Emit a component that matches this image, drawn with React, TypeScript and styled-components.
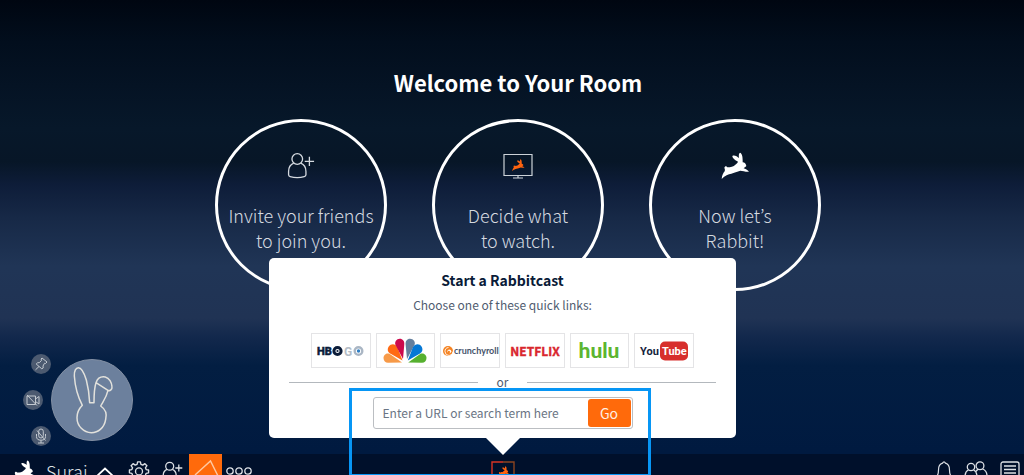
import React from "react";
import styled, { createGlobalStyle } from "styled-components";

const font = `"Noto Sans CJK KR", "Noto Sans", sans-serif`;

const GlobalStyle = createGlobalStyle`
  *, *::before, *::after { box-sizing: border-box; }
  html, body { margin: 0; }
  body { font-family: ${font}; background: #001a40; }
  button, input { font-family: inherit; }
  h1, h2, p { margin: 0; }
  svg { display: block; flex: none; overflow: visible; }
`;

const Room = styled.div`
  position: relative;
  display: flex;
  flex-direction: column;
  height: 100vh;
  overflow: hidden;
  background: linear-gradient(
    180deg,
    #000611 0%,
    #020e1d 9%,
    #051324 18%,
    #07182a 27%,
    #071627 34%,
    #0e1d39 39%,
    #172947 46%,
    #203556 56%,
    #203354 67%,
    #12284c 71%,
    #031e42 77%,
    #001a40 95%
  );
`;

const Stage = styled.main`
  flex: 1;
  min-height: 0;
  display: flex;
  flex-direction: column;
  align-items: center;
  padding: 66px 0 0 12px;
`;

const Title = styled.h1`
  color: #fff;
  font-size: 22px;
  font-weight: 700;
  line-height: 32px;
`;

const Steps = styled.div`
  display: flex;
  justify-content: center;
  gap: 45px;
  margin-top: 21px;
`;

const Step = styled.section`
  display: flex;
  flex-direction: column;
  align-items: center;
  width: 172px;
  height: 172px;
  padding-top: 30px;
  border: 3px solid #fff;
  border-radius: 50%;
  color: #d5dae0;
  text-align: center;
`;

const StepText = styled.p`
  margin-top: 23px;
  font-size: 18px;
  font-weight: 300;
  line-height: 25px;
  white-space: nowrap;
`;

const PopoverLayer = styled.div`
  position: absolute;
  left: 0;
  right: 19px;
  bottom: 37px;
  display: flex;
  justify-content: center;
`;

const Popover = styled.section`
  position: relative;
  display: flex;
  flex-direction: column;
  align-items: center;
  width: 467px;
  padding: 11px 20px 9px;
  border-radius: 5px;
  background: #fff;
  color: #505c70;

  &::after {
    content: "";
    position: absolute;
    top: 100%;
    left: 50%;
    margin-left: -17px;
    border: 17px solid transparent;
    border-top-color: #fff;
    border-bottom: 0;
  }
`;

const PopoverTitle = styled.h2`
  color: #0a1b38;
  font-size: 14px;
  font-weight: 700;
  line-height: 22px;
`;

const Hint = styled.p`
  margin-top: 4px;
  font-size: 12px;
  line-height: 20px;
`;

const QuickLinks = styled.nav`
  display: grid;
  grid-template-columns: repeat(6, 1fr);
  gap: 5px;
  width: 383px;
  margin-top: 18px;
`;

const QuickLink = styled.a`
  display: flex;
  align-items: center;
  justify-content: center;
  height: 35px;
  border: 1px solid #e4e4e6;
  text-decoration: none;
`;

const Divider = styled.div`
  display: flex;
  align-items: center;
  align-self: stretch;
  gap: 19px;
  margin-top: 4px;
  font-size: 12px;
  line-height: 20px;

  &::before,
  &::after {
    content: "";
    flex: 1;
    height: 1px;
    background: #b3b8bd;
  }
`;

const Search = styled.form`
  display: flex;
  width: 260px;
  height: 32px;
  margin-top: 5px;
  padding: 1px;
  border: 1px solid #bbbec2;
  border-radius: 3px;
`;

const SearchInput = styled.input`
  flex: 1;
  min-width: 0;
  padding: 0 8px 1px;
  border: 0;
  outline: 0;
  background: none;
  color: #505c70;
  font-size: 12px;

  &::placeholder {
    color: #6a7584;
    opacity: 1;
  }
`;

const GoButton = styled.button`
  width: 43px;
  padding: 0 0 1px;
  border: 0;
  border-radius: 3px;
  background: #ff6a0b;
  color: #fff0e4;
  font-size: 14px;
`;

const Self = styled.div`
  position: absolute;
  left: 23px;
  bottom: 29px;
  display: flex;
  align-items: center;
`;

const SelfControls = styled.div`
  display: flex;
  flex-direction: column;
  gap: 16px;
  width: 28px;
`;

const RoundButton = styled.button<{ $shift?: boolean }>`
  display: flex;
  align-items: center;
  justify-content: center;
  width: 20px;
  height: 20px;
  margin-left: ${(p) => (p.$shift ? "8px" : "0")};
  padding: 0;
  border: 0;
  border-radius: 50%;
  background: #4c5a70;
  color: #c3c9d0;
`;

const Avatar = styled.div`
  display: flex;
  align-items: center;
  justify-content: center;
  width: 82px;
  height: 82px;
  border: 1px solid #8390a4;
  border-radius: 50%;
  background: #6c809d;
`;

const Bar = styled.footer`
  display: grid;
  grid-template-columns: 1fr auto 1fr;
  flex: none;
  height: 21px;
  padding-right: 18px;
  overflow: hidden;
  background: #00102b;
  color: #dde1e6;
`;

const BarGroup = styled.div<{ $end?: boolean }>`
  display: flex;
  align-items: flex-start;
  justify-content: ${(p) => (p.$end ? "flex-end" : "flex-start")};
  gap: ${(p) => (p.$end ? "12px" : "0")};
  padding-left: ${(p) => (p.$end ? "0" : "12px")};
  margin-right: ${(p) => (p.$end ? "-14px" : "0")};
`;

const BarButton = styled.button<{ $top?: number; $gap?: number }>`
  display: flex;
  margin: ${(p) => p.$top ?? 7}px 0 0 ${(p) => p.$gap ?? 0}px;
  padding: 0;
  border: 0;
  background: none;
  color: inherit;
`;

const ShareButton = styled(BarButton)`
  width: 33px;
  height: 34px;
  margin: 0 0 0 6px;
  background: #ff6a0b;
  color: #ffc9a2;
`;

const UserName = styled.span`
  margin: 4px 0 0 11px;
  font-size: 18px;
  font-weight: 300;
  line-height: 26px;
`;

const Highlight = styled.div`
  position: absolute;
  left: calc(50% - 163px);
  bottom: -2px;
  width: 302px;
  height: 89px;
  border: 3px solid #0796f5;
  pointer-events: none;
`;

const rabbitPath =
  "M2 81C3 69 7 63 11 58C12 54 12 51 10 48C11 43 16 41 19 46C29 45 38 45 43 38C47 35 50 32 51 29C42 25 34 18 34 12C40 8 49 14 54 18C53 10 53 4 57 2C63 4 65 13 65 26L65 31C71 31 75 36 76 42C73 46 70 46 68 49C73 51 80 54 84 59C74 60 65 56 58 56C49 60 39 61 31 65C22 66 12 70 2 81Z";

const Rabbit = ({ w = 28 }: { w?: number }) => (
  <svg width={w} height={w} viewBox="0 0 84 84" fill="#fff">
    <path d={rabbitPath} />
  </svg>
);

const AddPerson = ({ w, sw }: { w: number; sw: number }) => (
  <svg width={w} height={w} viewBox="0 0 30 30" fill="none" stroke="currentColor" strokeWidth={sw}>
    <circle cx="11" cy="7.5" r="5.7" />
    <path d="M7.2 12C3.4 13.5 1.7 17 1.7 21V24.5Q1.7 26 3.3 26.4Q11 28.4 18.5 26.4Q20.3 26 20.3 24.5V21C20.3 17 18.5 13.5 14.8 12M19 10H29M24 5V15" />
  </svg>
);

const Monitor = () => (
  <svg width="30" height="28" viewBox="0 0 30 28" fill="none" stroke="#ccd2d8" strokeWidth="1.2">
    <path d="M1 2.500H29V23.500H1ZM15 23.500V26M10 26H20" />
    <path transform="translate(9 7) scale(.15)" stroke="none" fill="#ff6410" d={rabbitPath} />
  </svg>
);

const CastIcon = () => (
  <svg width="24" height="24" viewBox="0 0 24 24" fill="none">
    <path d="M1 20V1H12" stroke="#d83424" strokeWidth="1.4" />
    <path d="M12 1H23V20" stroke="#8a4420" strokeWidth="1.4" />
    <path transform="translate(6.5 5) scale(.14)" fill="#ff6410" d={rabbitPath} />
  </svg>
);

const HboGo = () => (
  <svg width="48" height="14" viewBox="0 0 48 14" fontFamily="Roboto" fontWeight="700">
    <text x="0" y="11" fill="#0b1c38" stroke="#0b1c38" strokeWidth=".6" fontSize="11">HB</text>
    <circle cx="20.5" cy="7" r="3.6" fill="none" stroke="#0b1c38" strokeWidth="3" />
    <circle cx="20.5" cy="7" r="1.1" fill="#0b1c38" />
    <text x="27" y="11.5" fill="#b4bdc7" fontSize="12">G</text>
    <circle cx="41.5" cy="7" r="3.8" fill="none" stroke="#aab6c4" strokeWidth="2.4" />
    <circle cx="41.5" cy="7" r="1.7" fill="#2f7fc4" />
  </svg>
);

const Nbc = () => (
  <svg width="44" height="26" viewBox="0 0 44 26">
    <path fill="#f79a48" d="M19 24.5L6.5 15.7C2.500 14.500 .5 17.500 .5 20C.5 23 2.500 24.700 5 24.700Z" />
    <path fill="#ff6a13" d="M19.500 22.500L14.500 9.500C12.500 5.500 8 5.500 5.800 8.500C3.800 11.500 4.800 14 7.200 15.500Z" />
    <path fill="#cc0a4c" d="M20 21L21.200 7.500C22 3 19.500 .8 16.800 .8C13.500 .8 11.300 4 12.500 7Z" />
    <path fill="#647f9d" d="M24 21L31.500 7C32.800 4 30.500 .8 27 .8C24.200 .8 22 3 22.700 7.500Z" />
    <path fill="#0578d5" d="M24.800 22.500L37 15.500C39.500 14 40.200 11 38.500 8.500C36.500 5.500 32 5.500 29.800 9.500Z" />
    <path fill="#56b02f" d="M25.200 24.500L37.500 15.700C41.500 14.500 43.500 17.500 43.500 20C43.500 23 41.500 24.700 39 24.700Z" />
  </svg>
);

const Crunchyroll = () => (
  <svg width="56" height="12" viewBox="0 0 56 12">
    <circle cx="6" cy="6" r="5" fill="#f58220" />
    <path d="M11 6.500A4 4 0 1 1 6.500 2.500" fill="none" stroke="#fff" strokeWidth=".9" />
    <circle cx="7.300" cy="6.300" r="1.900" fill="#fff" />
    <circle cx="6.800" cy="6.900" r="1.200" fill="#f58220" />
    <text x="12" y="8.800" fontFamily="Lato" fontWeight="700" fontSize="9" fill="#45536b">crunchyroll</text>
  </svg>
);

const Netflix = () => (
  <svg width="48" height="14" viewBox="0 0 48 14">
    <text x="24" y="11.500" textAnchor="middle" fontFamily="Noto Sans CJK KR" fontWeight="700" fontSize="12" fill="#d9272d" stroke="#d9272d" strokeWidth=".4">NETFLIX</text>
  </svg>
);

const Hulu = () => (
  <svg width="46" height="18" viewBox="0 0 46 18">
    <text x="23" y="16" textAnchor="middle" fontFamily="Lato" fontWeight="900" fontSize="21" fill="#5cb531">hulu</text>
  </svg>
);

const YouTube = () => (
  <svg width="48" height="20" viewBox="0 0 48 20" fontFamily="Roboto" fontWeight="700" fontSize="11">
    <rect x="20" y=".5" width="28" height="19" rx="5" fill="#d72f2c" />
    <text x="0" y="14" fill="#14223c">You</text>
    <text x="22" y="14" fill="#fff">Tube</text>
  </svg>
);

const Pin = () => (
  <svg width="14" height="14" viewBox="0 0 14 14" fill="none" stroke="currentColor" strokeLinejoin="round">
    <path d="M8 1L13 5L11.500 6.500L10.500 6.300L9 9L9.200 11L7.800 11.800L2.200 7L3.500 5.800L5.500 5.600L7.600 3.200L7 2ZM5 9.500L1.500 12.800" />
  </svg>
);

const CameraOff = () => (
  <svg width="14" height="14" viewBox="0 0 14 14" fill="none" stroke="currentColor">
    <path d="M1 3H9.500V11.500H1ZM9.500 6L13 3.500V11L9.500 8.500M1 2L11 12.500" />
  </svg>
);

const MicOff = () => (
  <svg width="14" height="16" viewBox="0 0 14 16" fill="none" stroke="currentColor">
    <rect x="4.700" y="1" width="4.600" height="9" rx="2.300" />
    <path d="M2.500 6V8.500Q2.500 12.200 7 12.200T11.500 8.500V6M7 12.200V15M4 15H10M3 2.500L11.500 12.500" />
  </svg>
);

const Bunny = () => (
  <svg width="42" height="68" viewBox="0 0 126 204" fill="none" stroke="#e2e1dc" strokeWidth="4.500" strokeLinejoin="round">
    <path d="M56 110H69C69 90 70 65 75 50C80 36 92 31 103 33C115 36 122 50 123 62C124 70 117 76 111 73C106 95 97 105 89 120C104 130 108 145 104 160C100 185 82 200 61 200C38 200 18 180 18 155C18 140 24 128 34 118C22 95 12 60 10 30C9 15 15 5 22 5C32 5 40 22 46 42C52 65 55 88 56 110ZM75 50L111 73" />
  </svg>
);

const Chevron = () => (
  <svg width="18" height="10" viewBox="0 0 18 10" fill="none" stroke="#fff" strokeWidth="1.800">
    <path d="M1 9L9 1.500L17 9" />
  </svg>
);

const Gear = () => (
  <svg width="20" height="20" viewBox="0 0 24 24" fill="none" stroke="currentColor" strokeWidth="1.600" strokeLinejoin="round">
    <path d="M10.300 1H13.700L14.300 4.100L16.500 5L19.100 3.200L21.500 5.600L19.700 8.200L20.600 10.300L23.500 10.800V14.200L20.600 14.800L19.700 17L21.500 19.500L19.100 22L16.500 20.200L14.300 21.100L13.700 24H10.300L9.700 21.100L7.500 20.200L4.900 22L2.500 19.500L4.300 17L3.400 14.800L.5 14.200V10.800L3.400 10.300L4.300 8.200L2.500 5.600L4.900 3.200L7.500 5L9.700 4.100Z" />
    <circle cx="12" cy="12.500" r="4.200" />
  </svg>
);

const Dots = () => (
  <svg width="26" height="10" viewBox="0 0 26 10" fill="none" stroke="currentColor" strokeWidth="1.300">
    <circle cx="4" cy="5" r="3.200" />
    <circle cx="13" cy="5" r="3.200" />
    <circle cx="22" cy="5" r="3.200" />
  </svg>
);

const Share = () => (
  <svg width="33" height="34" viewBox="0 0 33 34" fill="none" stroke="currentColor" strokeWidth="1.400">
    <path d="M6 21L21.500 7L30 24" />
  </svg>
);

const Bell = () => (
  <svg width="16" height="20" viewBox="0 0 16 20" fill="none" stroke="currentColor" strokeWidth="1.200">
    <path d="M6.500 2.200Q8 -.5 9.500 2.200C12.500 3 13.500 6 13.500 9C13.500 12 14 14 15.500 16H.5C2 14 2.500 12 2.500 9C2.500 6 3.500 3 6.500 2.200Z" />
  </svg>
);

const People = () => (
  <svg width="24" height="20" viewBox="0 0 24 20" fill="none" stroke="currentColor" strokeWidth="1.300">
    <circle cx="7" cy="6" r="3.700" />
    <circle cx="16" cy="4.700" r="3.900" />
    <path d="M4.500 9C1.800 10 1 12 1 16H13C13 12 12 10 9.500 9M12 10.500Q13 8.700 14 8.300M18.500 8C21.500 9 23 11.500 23 15H13" />
  </svg>
);

const List = () => (
  <svg width="20" height="20" viewBox="0 0 20 20" fill="none" stroke="currentColor" strokeWidth="1.300">
    <rect x="1" y="1" width="18" height="18" rx="2" />
    <path d="M4 5H16M4 8.500H16M4 12H16" />
  </svg>
);

const services = [
  { name: "HBO GO", Logo: HboGo },
  { name: "NBC", Logo: Nbc },
  { name: "Crunchyroll", Logo: Crunchyroll },
  { name: "Netflix", Logo: Netflix },
  { name: "Hulu", Logo: Hulu },
  { name: "YouTube", Logo: YouTube },
];

export default function App() {
  return (
    <>
      <GlobalStyle />
      <Room>
        <Stage>
          <Title>Welcome to Your Room</Title>
          <Steps>
            <Step>
              <AddPerson w={28} sw={1.4} />
              <StepText>Invite your friends<br />to join you.</StepText>
            </Step>
            <Step>
              <Monitor />
              <StepText>Decide what<br />to watch.</StepText>
            </Step>
            <Step>
              <Rabbit />
              <StepText>Now let’s<br />Rabbit!</StepText>
            </Step>
          </Steps>
        </Stage>

        <Bar>
          <BarGroup>
            <BarButton aria-label="Home" $top={6}><Rabbit w={23} /></BarButton>
            <UserName>Suraj</UserName>
            <BarButton aria-label="Account menu" $top={13} $gap={8}><Chevron /></BarButton>
            <BarButton aria-label="Settings" $gap={15}><Gear /></BarButton>
            <BarButton aria-label="Invite" $gap={13}><AddPerson w={21} sw={1.8} /></BarButton>
            <ShareButton aria-label="Share"><Share /></ShareButton>
            <BarButton aria-label="More" $top={12} $gap={4}><Dots /></BarButton>
          </BarGroup>
          <BarButton aria-label="Rabbitcast"><CastIcon /></BarButton>
          <BarGroup $end>
            <BarButton aria-label="Notifications"><Bell /></BarButton>
            <BarButton aria-label="Friends"><People /></BarButton>
            <BarButton aria-label="Chat"><List /></BarButton>
          </BarGroup>
        </Bar>

        <Self>
          <SelfControls>
            <RoundButton $shift aria-label="Pin"><Pin /></RoundButton>
            <RoundButton aria-label="Camera off"><CameraOff /></RoundButton>
            <RoundButton $shift aria-label="Microphone off"><MicOff /></RoundButton>
          </SelfControls>
          <Avatar><Bunny /></Avatar>
        </Self>

        <PopoverLayer>
          <Popover>
            <PopoverTitle>Start a Rabbitcast</PopoverTitle>
            <Hint>Choose one of these quick links:</Hint>
            <QuickLinks aria-label="Quick links">
              {services.map(({ name, Logo }) => (
                <QuickLink key={name} href="#" aria-label={name}><Logo /></QuickLink>
              ))}
            </QuickLinks>
            <Divider>or</Divider>
            <Search onSubmit={(e) => e.preventDefault()}>
              <SearchInput aria-label="URL or search term" placeholder="Enter a URL or search term here" />
              <GoButton type="submit">Go</GoButton>
            </Search>
          </Popover>
        </PopoverLayer>

        <Highlight />
      </Room>
    </>
  );
}
